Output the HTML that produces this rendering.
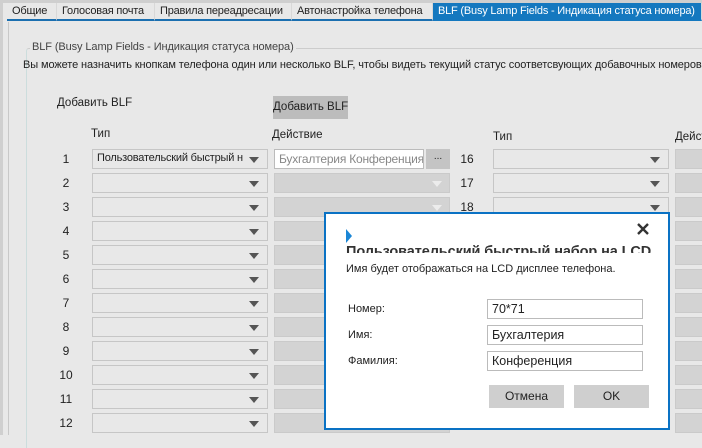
<!DOCTYPE html><html><head><meta charset="utf-8"><style>
*{box-sizing:border-box;margin:0;padding:0}
body{width:702px;height:435px;overflow:hidden;background:#e8e8e8;font-family:"Liberation Sans",sans-serif;font-size:12px;color:#222;position:relative}
.a{position:absolute;white-space:nowrap}
.tab{position:absolute;top:3px;height:18px;line-height:17px;padding:0 5px;border-bottom:2px solid #1b6fb0;font-size:11px;letter-spacing:-0.2px;color:#222;white-space:nowrap;border-right:1px solid #d8d8d8}
.sel{border:1px solid #c6c6c6;background:#e8e8e8;height:20px;position:absolute}
.sel:after{content:"";position:absolute;right:8px;top:7px;border-left:5px solid transparent;border-right:5px solid transparent;border-top:6px solid #555}
.dis{position:absolute;height:20px;background:#d3d3d3;border:1px solid #cacaca}
.dis.ar:after{content:"";position:absolute;right:7px;top:7px;border-left:5px solid transparent;border-right:5px solid transparent;border-top:6px solid #ececec}
.n{position:absolute;width:20px;text-align:center;font-size:12px}
.inp{position:absolute;border:1px solid #bbb;background:#fff;height:20px;padding-left:4px;line-height:18px;font-size:12.5px;white-space:nowrap}
.btn{position:absolute;background:#cfcfcf;height:23px;line-height:23px;text-align:center;font-size:12px}
</style></head><body>
<div class="a" style="left:0;top:0;width:702px;height:3px;background:#cfcfcf"></div>
<div class="a" style="left:0;top:0;width:3px;height:435px;background:#cfcfcf"></div>
<div class="a" style="left:8px;top:22px;width:1px;height:413px;background:#c8c8c8"></div>
<div class="tab" style="left:7px;width:50px">Общие</div>
<div class="tab" style="left:57px;width:98px">Голосовая почта</div>
<div class="tab" style="left:155px;width:137px">Правила переадресации</div>
<div class="tab" style="left:292px;width:141px">Автонастройка телефона</div>
<div class="tab" style="left:433px;width:269px;background:#1478bf;color:#fff;border-bottom-color:#1478bf">BLF (Busy Lamp Fields - Индикация статуса номера)</div>
<div class="a" style="left:26px;top:48px;width:700px;height:400px;border-left:1px solid #cdd;border-top:1px solid #ccc;border-radius:3px 0 0 0"></div>
<div class="a" style="left:30px;top:41px;background:#e8e8e8;padding:0 2px;color:#444;font-size:11px;letter-spacing:-0.1px">BLF (Busy Lamp Fields - Индикация статуса номера)</div>
<div class="a" style="left:23px;top:59px;font-size:11px;letter-spacing:-0.1px">Вы можете назначить кнопкам телефона один или несколько BLF, чтобы видеть текущий статус соответсвующих добавочных номеров</div>
<div class="a" style="left:57px;top:97px;font-size:11.5px">Добавить BLF</div>
<div class="a" style="left:273px;top:96px;width:75px;height:23px;background:#bcbcbc;line-height:23px;text-align:center;font-size:11.5px">Добавить BLF</div>
<div class="a" style="left:91px;top:128px;font-size:11.5px">Тип</div>
<div class="a" style="left:272px;top:129px;font-size:11.5px">Действие</div>
<div class="a" style="left:493px;top:131px;font-size:11.5px">Тип</div>
<div class="a" style="left:675px;top:131px;font-size:11.5px">Действие</div>

<div class="n" style="left:56px;top:152px">1</div><div class="sel" style="left:92px;top:149px;width:176px;overflow:hidden"><span class="a" style="left:4px;top:2px;font-size:11px;letter-spacing:-0.2px;width:150px;overflow:hidden">Пользовательский быстрый н</span></div>
<div class="inp" style="left:274px;top:149px;width:150px;color:#888;overflow:hidden;font-size:12px;letter-spacing:-0.2px">Бухгалтерия Конференция</div>
<div class="a" style="left:426px;top:149px;width:24px;height:20px;background:#c4c4c4;text-align:center;line-height:16px;font-size:10px">...</div>
<div class="n" style="left:56px;top:176px">2</div><div class="sel" style="left:92px;top:173px;width:176px"></div><div class="dis ar" style="left:274px;top:173px;width:176px"></div>
<div class="n" style="left:56px;top:200px">3</div><div class="sel" style="left:92px;top:197px;width:176px"></div><div class="dis ar" style="left:274px;top:197px;width:176px"></div>
<div class="n" style="left:56px;top:224px">4</div><div class="sel" style="left:92px;top:221px;width:176px"></div><div class="dis" style="left:274px;top:221px;width:176px"></div>
<div class="n" style="left:56px;top:248px">5</div><div class="sel" style="left:92px;top:245px;width:176px"></div><div class="dis" style="left:274px;top:245px;width:176px"></div>
<div class="n" style="left:56px;top:272px">6</div><div class="sel" style="left:92px;top:269px;width:176px"></div><div class="dis" style="left:274px;top:269px;width:176px"></div>
<div class="n" style="left:56px;top:296px">7</div><div class="sel" style="left:92px;top:293px;width:176px"></div><div class="dis" style="left:274px;top:293px;width:176px"></div>
<div class="n" style="left:56px;top:320px">8</div><div class="sel" style="left:92px;top:317px;width:176px"></div><div class="dis" style="left:274px;top:317px;width:176px"></div>
<div class="n" style="left:56px;top:344px">9</div><div class="sel" style="left:92px;top:341px;width:176px"></div><div class="dis" style="left:274px;top:341px;width:176px"></div>
<div class="n" style="left:56px;top:368px">10</div><div class="sel" style="left:92px;top:365px;width:176px"></div><div class="dis" style="left:274px;top:365px;width:176px"></div>
<div class="n" style="left:56px;top:392px">11</div><div class="sel" style="left:92px;top:389px;width:176px"></div><div class="dis" style="left:274px;top:389px;width:176px"></div>
<div class="n" style="left:56px;top:416px">12</div><div class="sel" style="left:92px;top:413px;width:176px"></div><div class="dis" style="left:274px;top:413px;width:176px"></div>

<div class="n" style="left:457px;top:152px">16</div><div class="sel" style="left:493px;top:149px;width:176px"></div><div class="dis" style="left:675px;top:149px;width:40px"></div>
<div class="n" style="left:457px;top:176px">17</div><div class="sel" style="left:493px;top:173px;width:176px"></div><div class="dis" style="left:675px;top:173px;width:40px"></div>
<div class="n" style="left:457px;top:200px">18</div><div class="sel" style="left:493px;top:197px;width:176px"></div><div class="dis" style="left:675px;top:197px;width:40px"></div>
<div class="dis" style="left:675px;top:221px;width:40px"></div><div class="dis" style="left:675px;top:245px;width:40px"></div><div class="dis" style="left:675px;top:269px;width:40px"></div><div class="dis" style="left:675px;top:293px;width:40px"></div><div class="dis" style="left:675px;top:317px;width:40px"></div><div class="dis" style="left:675px;top:341px;width:40px"></div><div class="dis" style="left:675px;top:365px;width:40px"></div><div class="dis" style="left:675px;top:389px;width:40px"></div><div class="dis" style="left:675px;top:413px;width:40px"></div>

<div class="a" style="left:324px;top:212px;width:346px;height:218px;background:#fff;border:2px solid #0a72c4">
 <div class="a" style="left:20px;top:15px;border-top:7px solid transparent;border-bottom:7px solid transparent;border-left:6px solid #1a86d6"></div>
 <svg class="a" style="left:311px;top:9px" width="12" height="12"><path d="M1 1L11 11M11 1L1 11" stroke="#333" stroke-width="2.4"/></svg>
 <div class="a" style="left:20px;top:30px;width:310px;height:9px;overflow:hidden"><div style="font-size:14.5px;font-weight:bold;color:#333;letter-spacing:-0.1px;line-height:17px">Пользовательский быстрый набор на LCD</div></div>
 <div class="a" style="left:20px;top:49px;font-size:11px">Имя будет отображаться на LCD дисплее телефона.</div>
 <div class="a" style="left:22px;top:89px;font-size:11px">Номер:</div>
 <div class="a" style="left:22px;top:115px;font-size:11px">Имя:</div>
 <div class="a" style="left:22px;top:141px;font-size:11px">Фамилия:</div>
 <div class="inp" style="left:161px;top:85px;width:156px">70*71</div>
 <div class="inp" style="left:161px;top:111px;width:156px">Бухгалтерия</div>
 <div class="inp" style="left:161px;top:137px;width:156px">Конференция</div>
 <div class="btn" style="left:163px;top:171px;width:75px">Отмена</div>
 <div class="btn" style="left:248px;top:171px;width:75px">OK</div>
</div>
</body></html>
